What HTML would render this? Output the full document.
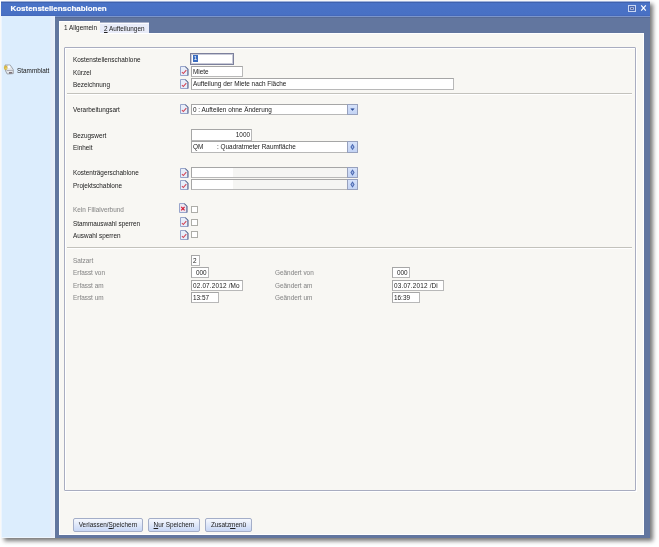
<!DOCTYPE html>
<html><head><meta charset="utf-8">
<style>
html,body{margin:0;padding:0;width:659px;height:547px;overflow:hidden;background:#fff;}
body{position:relative;font-family:"Liberation Sans",sans-serif;font-size:6.4px;color:#202020;}
.wrap{position:absolute;left:0;top:0;width:659px;height:547px;filter:blur(0.4px);}
.a{position:absolute;}
.l,.f,.btn{-webkit-text-stroke:0;}
.l{line-height:10px;white-space:nowrap;}
u{text-underline-offset:0.5px;text-decoration-thickness:0.6px;}
.g{color:#8a8a8a;-webkit-text-stroke:0.05px #8a8a8a;}
.shadow{left:4px;top:4px;width:649px;height:537px;background:#777;filter:blur(2px);}
.win{left:1px;top:1px;width:649px;height:537px;background:#62769f;}
.title{left:1px;top:1px;width:649px;height:15px;background:linear-gradient(#9db0da 0,#9db0da 1px,#3f62ae 1px,#3f62ae 2px,#4a73c7 2px,#4870c4 14px,#4569bb 14px,#4569bb 15px);}
.frl2{left:55px;top:16px;width:595px;height:1px;background:#7c96cc;}
.frl{left:55px;top:17px;width:595px;height:1px;background:#586b95;}
.ttext{left:10.5px;top:3.5px;font-size:8px;font-weight:bold;color:#fff;-webkit-text-stroke:0.15px #fff;letter-spacing:-0.03px;line-height:10px;white-space:nowrap;}
.side{left:1px;top:16px;width:54px;height:522px;box-shadow:inset 1px 0 0 #edf5fe,inset 0 -1px 0 #edf5fe;background:linear-gradient(90deg,#dcedfd 49px,#e4ecfa 50px,#e6eefb 53px,#ecf5fd 54px);}
.panel{left:59px;top:33px;width:583px;height:500px;background:#f8f7f3;border:1px solid #fff;}
.tab1{left:59px;top:21px;width:40px;height:13px;background:#f8f7f3;border-top:1px solid #fff;border-left:1px solid #fff;}
.tab2{left:99px;top:22px;width:50px;height:11px;background:linear-gradient(#a8b0c8 0,#a8b0c8 1px,#fafbff 1px,#fafbff 2px,#e9ecf9 2px);box-shadow:inset 1px 0 0 #b4bcd2;}
.grp{left:64px;top:47px;width:570px;height:442px;border:1px solid #a9adc0;border-radius:1px;}
.grpw{left:65px;top:48px;width:570px;height:442px;border:1px solid #fff;}
.sep{left:67px;width:565px;height:1px;background:#c3c2bc;border-bottom:1px solid #fff;}
.f{background:#fff;border:1px solid;border-color:#a6a6a6 #b8b8b8 #b8b8b8 #a6a6a6;box-sizing:border-box;line-height:9px;padding-left:1px;white-space:nowrap;overflow:hidden;}
.btn{box-sizing:border-box;border:1px solid #a4aec8;border-radius:2px;background:linear-gradient(#f6f8fd,#c8d7f5);text-align:center;line-height:12px;white-space:nowrap;}
.dd{box-sizing:border-box;border:1px solid #97a1bd;background:linear-gradient(#d6e2fa,#c4d4f4);}
.cb{box-sizing:border-box;width:7px;height:7px;border:1px solid #adada8;background:#fff;}
</style></head><body><div class="wrap">
<div class="a shadow"></div>
<div class="a win"></div>
<div class="a title"></div>
<div class="a frl"></div>
<div class="a frl2"></div>
<div class="a ttext">Kostenstellenschablonen</div>
<svg class="a" style="left:628px;top:5px" width="8" height="7" viewBox="0 0 8 7"><rect x="0.6" y="0.6" width="6.8" height="5.8" fill="none" stroke="#c9d6f2" stroke-width="1.2"/><rect x="1.7" y="1.7" width="4.6" height="3.6" fill="#c0cef0" stroke="#3a5aa8" stroke-width="1"/><circle cx="4" cy="3.5" r="0.8" fill="#1c2c60"/></svg>
<svg class="a" style="left:640px;top:4px" width="7" height="8" viewBox="0 0 7 8"><path d="M1.2 1.3L5.8 6.7M5.8 1.3L1.2 6.7" stroke="#fff" stroke-width="1.15"/></svg>
<div class="a side"></div>
<div class="a panel"></div>
<div class="a tab2"></div>
<div class="a tab1"></div>
<div class="a l" style="left:64px;top:23px;">1 Allgemein</div>
<div class="a l" style="left:104px;top:24px;"><u>2</u> Aufteilungen</div>
<svg class="a" style="left:3px;top:64px" width="12" height="11" viewBox="0 0 12 11"><path d="M2 1H7.2L10.3 5.6V9.6L4.2 10L2.6 7Z" fill="#e4e7ec" stroke="#8f949a" stroke-width="0.8"/><rect x="5" y="1.6" width="2.2" height="2.6" fill="#fbfdff"/><path d="M3.6 6.6L10 6.3" stroke="#a4a6ae" stroke-width="0.9"/><path d="M6 8.9L9.2 8.8" stroke="#5c4c52" stroke-width="1.1"/><ellipse cx="2.7" cy="3.8" rx="1.8" ry="2.2" fill="#d5b646"/><circle cx="3.1" cy="4.3" r="0.8" fill="#f0da76"/></svg>
<div class="a l" style="left:17px;top:66px;">Stammblatt</div>
<div class="a grpw"></div>
<div class="a grp"></div>
<div class="a sep" style="top:93px;"></div>
<div class="a sep" style="top:247px;"></div>
<div class="a l" style="left:73px;top:54.7px;">Kostenstellenschablone</div>
<div class="a l" style="left:73px;top:67.7px;">Kürzel</div>
<div class="a l" style="left:73px;top:79.7px;">Bezeichnung</div>
<div class="a l" style="left:73px;top:104.7px;">Verarbeitungsart</div>
<div class="a l" style="left:73px;top:130.7px;">Bezugswert</div>
<div class="a l" style="left:73px;top:142.7px;">Einheit</div>
<div class="a l" style="left:73px;top:167.7px;">Kostenträgerschablone</div>
<div class="a l" style="left:73px;top:180.7px;">Projektschablone</div>
<div class="a l g" style="left:73px;top:204.7px;">Kein Filialverbund</div>
<div class="a l" style="left:73px;top:218.7px;">Stammauswahl sperren</div>
<div class="a l" style="left:73px;top:230.7px;">Auswahl sperren</div>
<div class="a l g" style="left:73px;top:255.7px;">Satzart</div>
<div class="a l g" style="left:73px;top:267.7px;">Erfasst von</div>
<div class="a l g" style="left:73px;top:280.7px;">Erfasst am</div>
<div class="a l g" style="left:73px;top:292.7px;">Erfasst um</div>
<div class="a l g" style="left:275px;top:267.7px;">Geändert von</div>
<div class="a l g" style="left:275px;top:280.7px;">Geändert am</div>
<div class="a l g" style="left:275px;top:292.7px;">Geändert um</div>
<svg class="a" style="left:180px;top:66px" width="9" height="10" viewBox="0 0 9 10"><path d="M0.5 0.5H5.5L8 3V9.5H0.5Z" fill="#e8eefa" stroke="#98a5cb"/><path d="M5.3 0.6L7.9 3.2V9.4" fill="none" stroke="#6a7698" stroke-width="1.1"/><path d="M1.9 6L3.3 7.5L6.3 4.2" fill="none" stroke="#d2404f" stroke-width="1.05"/></svg>
<svg class="a" style="left:180px;top:79px" width="9" height="10" viewBox="0 0 9 10"><path d="M0.5 0.5H5.5L8 3V9.5H0.5Z" fill="#e8eefa" stroke="#98a5cb"/><path d="M5.3 0.6L7.9 3.2V9.4" fill="none" stroke="#6a7698" stroke-width="1.1"/><path d="M1.9 6L3.3 7.5L6.3 4.2" fill="none" stroke="#d2404f" stroke-width="1.05"/></svg>
<svg class="a" style="left:180px;top:104px" width="9" height="10" viewBox="0 0 9 10"><path d="M0.5 0.5H5.5L8 3V9.5H0.5Z" fill="#e8eefa" stroke="#98a5cb"/><path d="M5.3 0.6L7.9 3.2V9.4" fill="none" stroke="#6a7698" stroke-width="1.1"/><path d="M1.9 6L3.3 7.5L6.3 4.2" fill="none" stroke="#d2404f" stroke-width="1.05"/></svg>
<svg class="a" style="left:180px;top:168px" width="9" height="10" viewBox="0 0 9 10"><path d="M0.5 0.5H5.5L8 3V9.5H0.5Z" fill="#e8eefa" stroke="#98a5cb"/><path d="M5.3 0.6L7.9 3.2V9.4" fill="none" stroke="#6a7698" stroke-width="1.1"/><path d="M1.9 6L3.3 7.5L6.3 4.2" fill="none" stroke="#d2404f" stroke-width="1.05"/></svg>
<svg class="a" style="left:180px;top:180px" width="9" height="10" viewBox="0 0 9 10"><path d="M0.5 0.5H5.5L8 3V9.5H0.5Z" fill="#e8eefa" stroke="#98a5cb"/><path d="M5.3 0.6L7.9 3.2V9.4" fill="none" stroke="#6a7698" stroke-width="1.1"/><path d="M1.9 6L3.3 7.5L6.3 4.2" fill="none" stroke="#d2404f" stroke-width="1.05"/></svg>
<svg class="a" style="left:180px;top:217px" width="9" height="10" viewBox="0 0 9 10"><path d="M0.5 0.5H5.5L8 3V9.5H0.5Z" fill="#e8eefa" stroke="#98a5cb"/><path d="M5.3 0.6L7.9 3.2V9.4" fill="none" stroke="#6a7698" stroke-width="1.1"/><path d="M1.9 6L3.3 7.5L6.3 4.2" fill="none" stroke="#d2404f" stroke-width="1.05"/></svg>
<svg class="a" style="left:180px;top:230px" width="9" height="10" viewBox="0 0 9 10"><path d="M0.5 0.5H5.5L8 3V9.5H0.5Z" fill="#e8eefa" stroke="#98a5cb"/><path d="M5.3 0.6L7.9 3.2V9.4" fill="none" stroke="#6a7698" stroke-width="1.1"/><path d="M1.9 6L3.3 7.5L6.3 4.2" fill="none" stroke="#d2404f" stroke-width="1.05"/></svg>
<svg class="a" style="left:179px;top:203px" width="9" height="10" viewBox="0 0 9 10"><path d="M0.5 0.5H5.5L8 3V9.5H0.5Z" fill="#ece6f2" stroke="#98a5cb"/><path d="M5.3 0.6L7.9 3.2V9.4" fill="none" stroke="#6a7698" stroke-width="1.1"/><path d="M2.2 3.8L5.6 7.4M5.6 3.8L2.2 7.4" fill="none" stroke="#d42038" stroke-width="1.2"/></svg>
<div class="a f" style="left:190px;top:53px;width:44px;height:12px;border-color:#7c809c;box-shadow:inset 0 0 0 1px #c8cad8;"><div class="a" style="left:2px;top:1px;width:5px;height:7px;background:#3a6cc0;color:#fff;line-height:7px;text-align:center;-webkit-text-stroke:0;font-size:6px">1</div></div>
<div class="a f" style="left:191px;top:66px;width:52px;height:11px;">Miete</div>
<div class="a f" style="left:191px;top:78px;width:263px;height:12px;">Aufteilung der Miete nach Fläche</div>
<div class="a f" style="left:191px;top:104px;width:167px;height:11px;">0 : Aufteilen ohne Änderung</div>
<div class="a f" style="left:191px;top:129px;width:61px;height:12px;text-align:right;padding-right:1px;">1000</div>
<div class="a f" style="left:191px;top:141px;width:167px;height:12px;padding-left:1px;">QM<span style="position:absolute;left:25px;top:0">: Quadratmeter Raumfläche</span></div>
<div class="a f" style="left:191px;top:167px;width:167px;height:11px;background:linear-gradient(90deg,#fff 41px,#f5f5f3 41px);"></div>
<div class="a f" style="left:191px;top:179px;width:167px;height:11px;background:linear-gradient(90deg,#fff 41px,#f5f5f3 41px);"></div>
<div class="a dd" style="left:347px;top:104px;width:11px;height:11px;"></div><svg class="a" style="left:347px;top:104px" width="11" height="11" viewBox="0 0 11 11"><path d="M3.8 4.7H7.2L5.5 6.6Z" fill="#2f4f9a" stroke="#2f4f9a" stroke-width="0.5"/></svg>
<div class="a dd" style="left:347px;top:141px;width:11px;height:12px;"></div><svg class="a" style="left:347px;top:141px" width="11" height="12" viewBox="0 0 11 12"><path d="M5.5 2.8L7.6 6.0L5.5 9.2L3.4 6.0Z" fill="#4a68b0"/><path d="M5.5 4.6L6.4 6.0L5.5 7.4L4.6 6.0Z" fill="#a8bce8"/></svg>
<div class="a dd" style="left:347px;top:167px;width:11px;height:11px;"></div><svg class="a" style="left:347px;top:167px" width="11" height="11" viewBox="0 0 11 11"><path d="M5.5 2.3L7.6 5.5L5.5 8.7L3.4 5.5Z" fill="#4a68b0"/><path d="M5.5 4.1L6.4 5.5L5.5 6.9L4.6 5.5Z" fill="#a8bce8"/></svg>
<div class="a dd" style="left:347px;top:179px;width:11px;height:11px;"></div><svg class="a" style="left:347px;top:179px" width="11" height="11" viewBox="0 0 11 11"><path d="M5.5 2.3L7.6 5.5L5.5 8.7L3.4 5.5Z" fill="#4a68b0"/><path d="M5.5 4.1L6.4 5.5L5.5 6.9L4.6 5.5Z" fill="#a8bce8"/></svg>
<div class="a cb" style="left:191px;top:206px;"></div>
<div class="a cb" style="left:191px;top:219px;"></div>
<div class="a cb" style="left:191px;top:231px;"></div>
<div class="a f" style="left:191px;top:255px;width:9px;height:11px;">2</div>
<div class="a f" style="left:191px;top:267px;width:18px;height:11px;padding-left:4px;">000</div>
<div class="a f" style="left:191px;top:280px;width:52px;height:11px;letter-spacing:0.17px;">02.07.2012 /Mo</div>
<div class="a f" style="left:191px;top:292px;width:28px;height:11px;">13:57</div>
<div class="a f" style="left:392px;top:267px;width:18px;height:11px;padding-left:4px;">000</div>
<div class="a f" style="left:392px;top:280px;width:52px;height:11px;letter-spacing:0.17px;">03.07.2012 /Di</div>
<div class="a f" style="left:392px;top:292px;width:28px;height:11px;">16:39</div>
<div class="a btn" style="left:73px;top:518px;width:70px;height:14px;">Verlassen/<u>S</u>peichern</div>
<div class="a btn" style="left:148px;top:518px;width:52px;height:14px;"><u>N</u>ur Speichern</div>
<div class="a btn" style="left:205px;top:518px;width:47px;height:14px;">Zusatz<u>m</u>enü</div>
</div></body></html>
